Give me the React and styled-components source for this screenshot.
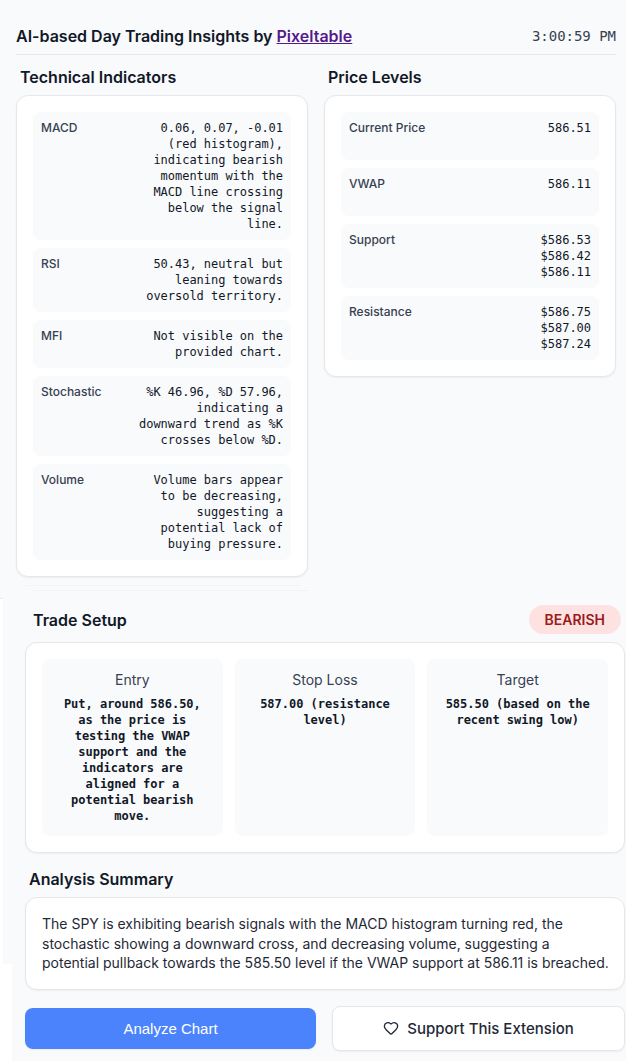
import React from "react";
import styled, { createGlobalStyle, css } from "styled-components";
import { Heart } from "lucide-react";

const Global = createGlobalStyle`
  * { box-sizing: border-box; }
  body {
    margin: 0;
    background: #f9fafc;
    color: #111827;
    font-family: Inter, sans-serif;
    font-size: 16px;
  }
`;

const mono = css`
  font-family: "DejaVu Sans Mono", "Liberation Mono", monospace;
  letter-spacing: -0.024px;
`;

const Page = styled.div`
  width: 626px;
  height: 1061px;
  overflow: hidden;
  display: flex;
  flex-direction: column;
`;

const Overview = styled.div`
  height: 598px;
  padding: 18px 10px 0 16px;
`;

const Header = styled.header`
  display: flex;
  justify-content: space-between;
  align-items: center;
  height: 37px;
  border-bottom: 1px solid #e5e7eb;
`;

const Title = styled.h1`
  margin: 0;
  font-size: 16px;
  line-height: 24px;
  font-weight: 600;
  a { color: #551a8b; }
`;

const Clock = styled.time`
  ${mono}
  font-size: 14px;
  line-height: 20px;
  color: #374151;
`;

const Columns = styled.div`
  display: grid;
  grid-template-columns: 1fr 1fr;
  column-gap: 16px;
  align-items: start;
`;

const Heading = styled.h2`
  margin: 0;
  padding-left: ${(p) => p.$inset}px;
  font-size: 16px;
  line-height: 24px;
  font-weight: 600;
`;

const Column = styled.section`
  padding-top: 10px;
`;

const Card = styled.div`
  margin-top: ${(p) => p.$top ?? 6}px;
  padding: 16px;
  background: #fff;
  border: 1px solid #e5e7eb;
  border-radius: 12px;
  box-shadow: 0 1px 2px rgba(0, 0, 0, 0.05);
`;

const RowList = styled.dl`
  margin: 0;
  display: flex;
  flex-direction: column;
  gap: 8px;
`;

const Row = styled.div`
  display: flex;
  justify-content: space-between;
  min-height: 48px;
  padding: 8px;
  background: #f9fafc;
  border-radius: 8px;
`;

const Label = styled.dt`
  font-size: 12px;
  line-height: 16px;
  font-weight: 500;
  color: #374151;
`;

const Value = styled.dd`
  ${mono}
  margin: 0;
  font-size: 12px;
  line-height: 16px;
  text-align: right;
  white-space: pre-line;
`;

const Seam = styled.div`
  height: 1px;
  margin: ${(p) => p.$margin};
  background: #f3f4f6;
`;

const Plan = styled.div`
  flex: 1;
  padding: 7px 1px 0 25px;
  background:
    linear-gradient(#e5e7eb, #e5e7eb) 0 0 / 3px 1px no-repeat,
    linear-gradient(#fff, #fff) 0 0 / 3px 100% no-repeat,
    linear-gradient(#fff, #fff) 0 366px / 12px 100% no-repeat;
`;

const SetupHeader = styled.div`
  display: flex;
  justify-content: space-between;
  align-items: center;
  height: 29px;
  padding-right: 4px;
`;

const Badge = styled.span`
  height: 29px;
  padding: 0 16px;
  border-radius: 15px;
  background: #fee2e2;
  color: #991b1b;
  font-size: 14px;
  line-height: 30px;
  font-weight: 600;
`;

const Targets = styled.div`
  display: grid;
  grid-template-columns: repeat(3, 1fr);
  gap: 12px;
`;

const Target = styled.div`
  min-height: 177px;
  padding: 10px 12px;
  background: #f9fafc;
  border-radius: 8px;
  text-align: center;
`;

const TargetName = styled.div`
  margin-bottom: 6px;
  font-size: 14px;
  line-height: 21px;
  color: #374151;
`;

const TargetValue = styled.div`
  ${mono}
  font-size: 12px;
  line-height: 16px;
  font-weight: 700;
  white-space: pre-line;
`;

const SummaryHeading = styled(Heading)`
  margin-top: 14px;
`;

const Summary = styled.p`
  margin: 0;
  height: 59px;
  font-size: 14px;
  line-height: 19.6px;
  color: #1f2937;
  white-space: pre;
`;

const Actions = styled.div`
  display: grid;
  grid-template-columns: 291px 293px;
  column-gap: 16px;
  align-items: center;
  margin-top: 16px;
`;

const Button = styled.button`
  display: flex;
  align-items: center;
  justify-content: center;
  gap: 8px;
  height: 45px;
  padding: 0;
  border: 1px solid #e5e7eb;
  border-radius: 8px;
  background: #fff;
  color: #1f2937;
  font: 500 15px/22px Inter, sans-serif;
  box-shadow: 0 1px 2px rgba(0, 0, 0, 0.05);
`;

const PrimaryButton = styled(Button)`
  height: 41px;
  border: 0;
  background: #4a83fb;
  color: #fff;
  font: 400 15px/22px "Liberation Sans", Arial, sans-serif;
`;

const HeartIcon = styled(Heart)`
  margin-top: -2px;
`;

const indicators = [
  ["MACD", "0.06, 0.07, -0.01\n(red histogram),\nindicating bearish\nmomentum with the\nMACD line crossing\nbelow the signal\nline."],
  ["RSI", "50.43, neutral but\nleaning towards\noversold territory."],
  ["MFI", "Not visible on the\nprovided chart."],
  ["Stochastic", "%K 46.96, %D 57.96,\nindicating a\ndownward trend as %K\ncrosses below %D."],
  ["Volume", "Volume bars appear\nto be decreasing,\nsuggesting a\npotential lack of\nbuying pressure."],
];

const levels = [
  ["Current Price", "586.51"],
  ["VWAP", "586.11"],
  ["Support", "$586.53\n$586.42\n$586.11"],
  ["Resistance", "$586.75\n$587.00\n$587.24"],
];

const targets = [
  ["Entry", "Put, around 586.50,\nas the price is\ntesting the VWAP\nsupport and the\nindicators are\naligned for a\npotential bearish\nmove."],
  ["Stop Loss", "587.00 (resistance\nlevel)"],
  ["Target", "585.50 (based on the\nrecent swing low)"],
];

const summary =
  "The SPY is exhibiting bearish signals with the MACD histogram turning red, the\nstochastic showing a downward cross, and decreasing volume, suggesting a\npotential pullback towards the 585.50 level if the VWAP support at 586.11 is breached.";

function DataCard({ title, rows }) {
  return (
    <Column>
      <Heading $inset={4}>{title}</Heading>
      <Card>
        <RowList>
          {rows.map(([label, value]) => (
            <Row key={label}>
              <Label>{label}</Label>
              <Value>{value}</Value>
            </Row>
          ))}
        </RowList>
      </Card>
    </Column>
  );
}

export default function App() {
  return (
    <Page>
      <Global />
      <Overview>
        <Header>
          <Title>
            AI-based Day Trading Insights by <a href="#pixeltable">Pixeltable</a>
          </Title>
          <Clock>3:00:59 PM</Clock>
        </Header>
        <Columns>
          <DataCard title="Technical Indicators" rows={indicators} />
          <DataCard title="Price Levels" rows={levels} />
        </Columns>
        <Seam $margin="8px 315px 0 10px" />
        <Seam $margin="4px 307px 0 17px" />
      </Overview>
      <Plan>
        <SetupHeader>
          <Heading $inset={8}>Trade Setup</Heading>
          <Badge>BEARISH</Badge>
        </SetupHeader>
        <Card $top={8}>
          <Targets>
            {targets.map(([name, value]) => (
              <Target key={name}>
                <TargetName>{name}</TargetName>
                <TargetValue>{value}</TargetValue>
              </Target>
            ))}
          </Targets>
        </Card>
        <SummaryHeading $inset={4}>Analysis Summary</SummaryHeading>
        <Card>
          <Summary>{summary}</Summary>
        </Card>
        <Actions>
          <PrimaryButton>Analyze Chart</PrimaryButton>
          <Button>
            <HeartIcon size={16} strokeWidth={2} />
            Support This Extension
          </Button>
        </Actions>
      </Plan>
    </Page>
  );
}
